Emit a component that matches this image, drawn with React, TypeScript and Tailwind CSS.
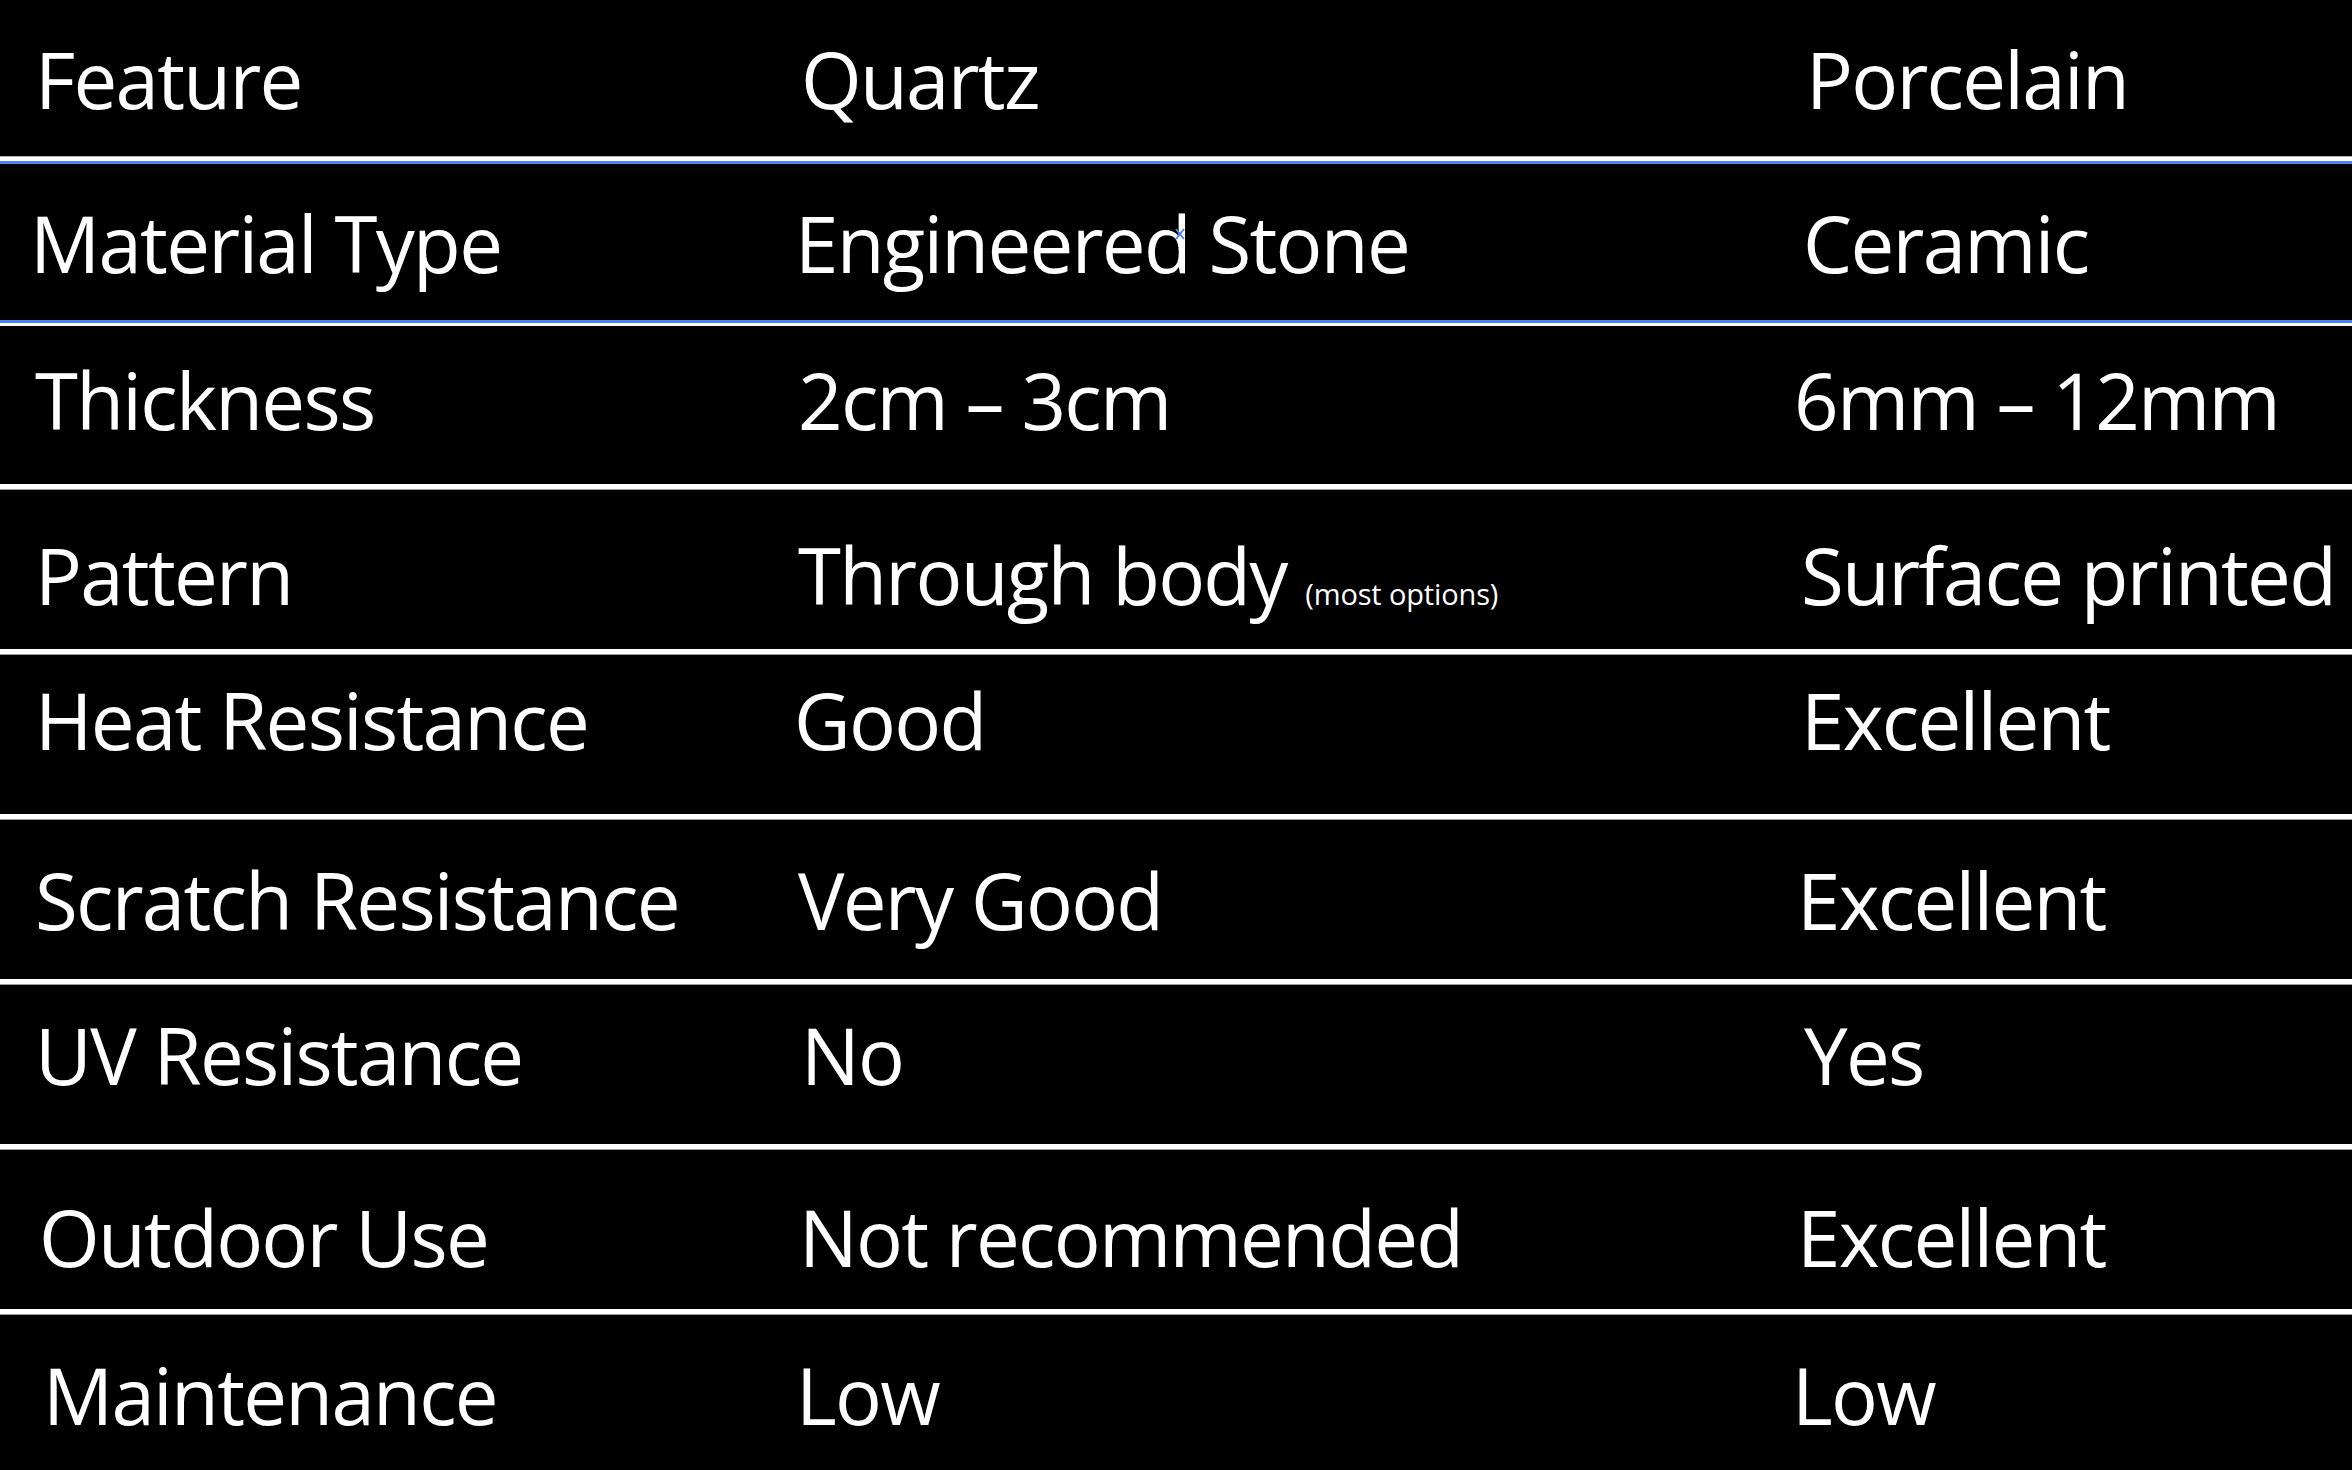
type Row = {
  cells: [string, string, string];
  height: string;
  pad: string;
  offsets: [string, string, string];
};

const rows: Row[] = [
  {
    cells: ['Material Type', 'Engineered Stone', 'Ceramic'],
    height: 'h-[156px]',
    pad: 'pt-[40px]',
    offsets: ['ml-[-5px]', 'ml-0', 'ml-[3px]'],
  },
  {
    cells: ['Thickness', '2cm – 3cm', '6mm – 12mm'],
    height: 'h-[158px]',
    pad: 'pt-[35px]',
    offsets: ['ml-0', 'ml-[3px]', 'ml-[-6px]'],
  },
  {
    cells: ['Pattern', 'Through body', 'Surface printed'],
    height: 'h-[159px]',
    pad: 'pt-[46px]',
    offsets: ['ml-0', 'ml-[3px]', 'ml-[1px]'],
  },
  {
    cells: ['Heat Resistance', 'Good', 'Excellent'],
    height: 'h-[159px]',
    pad: 'pt-[26px]',
    offsets: ['ml-0', 'ml-[-1px]', 'ml-[1px]'],
  },
  {
    cells: ['Scratch Resistance', 'Very Good', 'Excellent'],
    height: 'h-[159px]',
    pad: 'pt-[41px]',
    offsets: ['ml-0', 'ml-[3px]', 'ml-[-3px]'],
  },
  {
    cells: ['UV Resistance', 'No', 'Yes'],
    height: 'h-[159px]',
    pad: 'pt-[31px]',
    offsets: ['ml-0', 'ml-[6px]', 'ml-[4px]'],
  },
  {
    cells: ['Outdoor Use', 'Not recommended', 'Excellent'],
    height: 'h-[159px]',
    pad: 'pt-[48px]',
    offsets: ['ml-[4px]', 'ml-[4px]', 'ml-[-3px]'],
  },
  {
    cells: ['Maintenance', 'Low', 'Low'],
    height: 'h-[155px]',
    pad: 'pt-[41px]',
    offsets: ['ml-[8px]', 'ml-[1px]', 'ml-[-8px]'],
  },
];

function Cell({ text, offset }: { text: string; offset: string }) {
  if (text === 'Through body') {
    return (
      <div className={`whitespace-nowrap ${offset}`}>
        Through body{' '}
        <span className="text-[29px] tracking-[-0.005em]">(most options)</span>
      </div>
    );
  }
  if (text === 'Engineered Stone') {
    return (
      <div className={`relative whitespace-nowrap ${offset}`}>
        Engineered Stone
        <svg className="absolute left-[380px] top-[24px]" width="10" height="12" viewBox="0 0 10 12">
          <path d="M1 1 L9 11 M9 1 L1 11" stroke="#4f83f0" strokeWidth="2" fill="none" />
        </svg>
      </div>
    );
  }
  return <div className={`whitespace-nowrap ${offset}`}>{text}</div>;
}

function TableRow({ row }: { row: Row }) {
  return (
    <div className={`grid grid-cols-[760px_1005px_1fr] pl-[35px] ${row.height} ${row.pad}`}>
      {row.cells.map((c, i) => (
        <Cell key={i} text={c} offset={row.offsets[i]} />
      ))}
    </div>
  );
}

export default function App() {
  return (
    <div
      className="w-[2352px] h-[1470px] overflow-hidden bg-black text-white text-[78px] leading-none tracking-[-0.022em]"
      style={{ fontFamily: '"Open Sans", "Noto Sans", sans-serif' }}
    >
      <div className="grid grid-cols-[760px_1005px_1fr] pl-[35px] h-[156px] pt-[40px]">
        <div>Feature</div>
        <div className="ml-[6px]">Quartz</div>
        <div className="ml-[6px]">Porcelain</div>
      </div>
      <div className="h-[5px] bg-white border-t border-[#b0b0b0]" />
      <div className="h-[3px] bg-[#4f83f0]" />

      {rows.map((row, i) => (
        <div key={i}>
          <TableRow row={row} />
          {i === 0 && (
            <>
              <div className="h-[3px] bg-[#4f83f0]" />
              <div className="h-[3px] bg-white" />
            </>
          )}
          {i > 0 && i < rows.length - 1 && <div className="h-[6px] bg-white border-b border-[#9a9a9a]" />}
        </div>
      ))}
    </div>
  );
}
